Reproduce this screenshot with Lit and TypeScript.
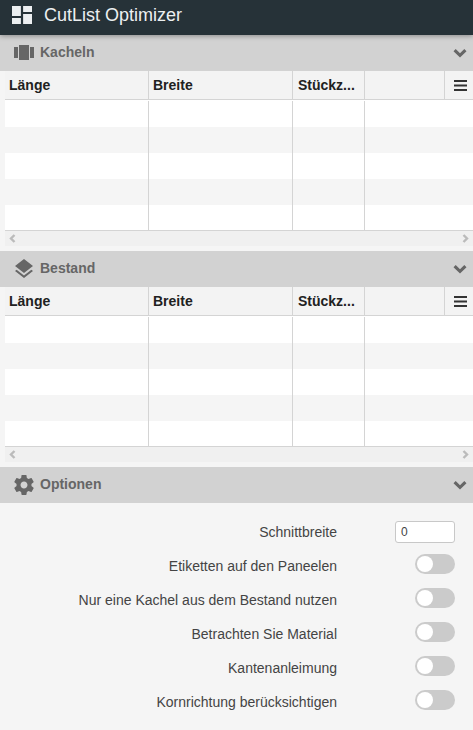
import { LitElement, html, css, svg } from "lit";
import { customElement } from "lit/decorators.js";

const icons = {
  carousel: svg`<path d="M7 19h10V4H7v15zm-5-2h4V6H2v11zm16-11v11h4V6h-4z"/>`,
  layers: svg`<path d="M11.99 18.54l-7.37-5.73L3 14.07l9 7 9-7-1.63-1.27-7.38 5.74zM12 16l7.36-5.73L21 9l-9-7-9 7 1.63 1.27L12 16z"/>`,
  gear: svg`<path d="M19.43 12.98c.04-.32.07-.64.07-.98s-.03-.66-.07-.98l2.11-1.65c.19-.15.24-.42.12-.64l-2-3.46c-.12-.22-.39-.3-.61-.22l-2.49 1c-.52-.4-1.08-.73-1.69-.98l-.38-2.65C14.46 2.18 14.25 2 14 2h-4c-.25 0-.46.18-.49.42l-.38 2.65c-.61.25-1.17.59-1.69.98l-2.49-1c-.23-.09-.49 0-.61.22l-2 3.46c-.13.22-.07.49.12.64l2.11 1.65c-.04.32-.07.65-.07.98s.03.66.07.98l-2.11 1.65c-.19.15-.24.42-.12.64l2 3.46c.12.22.39.3.61.22l2.49-1c.52.4 1.08.73 1.69.98l.38 2.65c.03.24.24.42.49.42h4c.25 0 .46-.18.49-.42l.38-2.65c.61-.25 1.17-.59 1.69-.98l2.49 1c.23.09.49 0 .61-.22l2-3.46c.12-.22.07-.49-.12-.64l-2.11-1.65zM12 15.5c-1.93 0-3.5-1.57-3.5-3.5s1.57-3.5 3.5-3.5 3.5 1.57 3.5 3.5-1.57 3.5-3.5 3.5z"/>`,
};

const options = [
  "Etiketten auf den Paneelen",
  "Nur eine Kachel aus dem Bestand nutzen",
  "Betrachten Sie Material",
  "Kantenanleimung",
  "Kornrichtung berücksichtigen",
];

@customElement("app-root")
export class AppRoot extends LitElement {
  static styles = css`
    :host {
      display: block;
      width: 473px;
      height: 730px;
      overflow: hidden;
      background: #f5f5f5;
      font-family: "Liberation Sans", Arial, sans-serif;
    }
    .top {
      position: relative;
      z-index: 2;
      height: 35px;
      display: flex;
      align-items: center;
      gap: 12px;
      padding-left: 12px;
      background: #263238;
      box-shadow: 0 1px 5px rgba(0, 0, 0, 0.35);
      color: #eceff1;
      font-size: 18px;
    }
    .logo {
      width: 20px;
      height: 18px;
      fill: #eceff1;
      margin-top: -5px;
    }
    .title {
      margin-top: -4px;
    }
    .sec {
      height: 36px;
      display: flex;
      align-items: center;
      padding: 0 5px 0 12px;
      background: #d2d2d2;
      color: #666;
      font-size: 14px;
      font-weight: bold;
    }
    .sec .ic {
      width: 24px;
      height: 24px;
      fill: #666;
      margin-right: 4px;
    }
    .sec .name {
      flex: 1;
      margin-bottom: 2px;
    }
    .chev {
      width: 16px;
      height: 10px;
      fill: #666;
    }
    .table {
      margin: 0 0 5px 5px;
    }
    .row {
      display: grid;
      grid-template-columns: 144px 144px 72px 80px 28px;
    }
    .head {
      height: 28px;
      background: #f3f3f3;
      border-bottom: 1px solid #d4d4d4;
      color: #212121;
      font-size: 14px;
      font-weight: bold;
    }
    .head > div {
      display: flex;
      align-items: center;
      padding-left: 4px;
      border-right: 1px solid #d4d4d4;
      white-space: nowrap;
    }
    .head > div:nth-child(3) {
      padding-left: 5px;
    }
    .head > div:last-child {
      border-right: 0;
      padding-left: 9px;
    }
    .menu {
      width: 13px;
      height: 11px;
      fill: #333;
    }
    .rows {
      box-sizing: content-box;
      height: 129px;
      padding-top: 1px;
      overflow: hidden;
      background: #fff;
      border-bottom: 1px solid #d4d4d4;
    }
    .rows .row {
      height: 26px;
    }
    .rows .row:nth-child(even) {
      background: #f5f5f5;
    }
    .rows .row > div {
      border-right: 1px solid #d4d4d4;
    }
    .rows .row > div:nth-child(4),
    .rows .row > div:nth-child(5) {
      border-right: 0;
    }
    .scroll {
      height: 15px;
      display: flex;
      align-items: center;
      justify-content: space-between;
      padding: 0 4px 0 4px;
      background: #f0f0f0;
    }
    .arrow {
      width: 7px;
      height: 9px;
      fill: none;
      stroke: #bbb;
      stroke-width: 2.4;
    }
    .opts {
      display: flex;
      flex-direction: column;
      padding: 18px 18px 0 0;
      color: #444;
      font-size: 14px;
    }
    .opt {
      display: grid;
      grid-template-columns: 1fr 118px;
      align-items: center;
      height: 34px;
      text-align: right;
    }
    .opt span {
      margin-top: 4px;
    }
    .opt.first {
      height: 22px;
      margin-bottom: 4px;
    }
    .opt.first span {
      margin-top: 0;
    }
    .ctl {
      display: flex;
      justify-content: flex-end;
    }
    .input {
      width: 60px;
      height: 22px;
      box-sizing: border-box;
      border: 1px solid #c8c8c8;
      border-radius: 3px;
      background: #fff;
      padding-left: 5px;
      font-size: 12px;
      line-height: 20px;
      color: #444;
      text-align: left;
    }
    .toggle {
      width: 40px;
      height: 20px;
      border-radius: 10px;
      background: #cbcbcb;
      box-sizing: border-box;
      padding: 2px;
    }
    .knob {
      width: 16px;
      height: 16px;
      border-radius: 50%;
      background: #fff;
    }
  `;

  private section(icon: unknown, name: string) {
    return html`<div class="sec">
      <svg class="ic" viewBox="0 0 24 24">${icon}</svg>
      <span class="name">${name}</span>
      <svg class="chev" viewBox="0 0 16 10"><polygon points="1.5,3.2 3.7,1 8,5.3 12.3,1 14.5,3.2 8,9.5" /></svg>
    </div>`;
  }

  private table() {
    return html`<div class="table">
      <div class="row head">
        <div>Länge</div>
        <div>Breite</div>
        <div>Stückz...</div>
        <div></div>
        <div>
          <svg class="menu" viewBox="0 0 13 11">
            <rect y="0" width="13" height="2" />
            <rect y="4.5" width="13" height="2" />
            <rect y="9" width="13" height="2" />
          </svg>
        </div>
      </div>
      <div class="rows">
        ${[0, 1, 2, 3, 4].map(
          () => html`<div class="row"><div></div><div></div><div></div><div></div><div></div></div>`
        )}
      </div>
      <div class="scroll">
        <svg class="arrow" viewBox="0 0 7 9"><polyline points="5.5,1 2,4.5 5.5,8" /></svg>
        <svg class="arrow" viewBox="0 0 7 9"><polyline points="1.5,1 5,4.5 1.5,8" /></svg>
      </div>
    </div>`;
  }

  render() {
    return html`
      <div class="top">
        <svg class="logo" viewBox="3 3 18 18" preserveAspectRatio="none">
          <path d="M3 13h8V3H3v10zm0 8h8v-6H3v6zm10 0h8V11h-8v10zm0-18v6h8V3h-8z" />
        </svg>
        <span class="title">CutList Optimizer</span>
      </div>
      ${this.section(icons.carousel, "Kacheln")} ${this.table()}
      ${this.section(icons.layers, "Bestand")} ${this.table()}
      ${this.section(icons.gear, "Optionen")}
      <div class="opts">
        <div class="opt first">
          <span>Schnittbreite</span>
          <div class="ctl"><div class="input">0</div></div>
        </div>
        ${options.map(
          (o) => html`<div class="opt">
            <span>${o}</span>
            <div class="ctl"><div class="toggle"><div class="knob"></div></div></div>
          </div>`
        )}
      </div>
    `;
  }
}
